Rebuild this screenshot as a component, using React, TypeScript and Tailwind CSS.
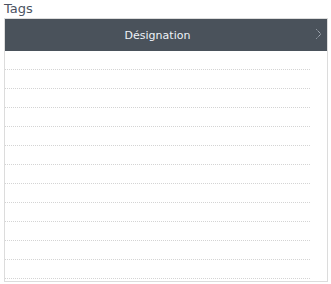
export default function App() {
  const rows = Array.from({ length: 12 });
  return (
    <div className="w-[331px] h-[284px] bg-white pl-1 pr-[3px]" style={{ fontFamily: '"DejaVu Sans", sans-serif' }}>
      <div className="h-[18px] text-[13px] leading-[18px] text-[#4b5261]">Tags</div>
      <div className="border border-[#dcdcdc] h-[264px] overflow-hidden">
        <div className="h-[32px] bg-[#4a525b] text-[#eef2f8] text-[11px] flex items-center relative">
          <div className="w-[305px] text-center pt-[3px]">Désignation</div>
          <svg className="absolute right-[5px] top-[10px]" width="6" height="10" viewBox="0 0 6 10">
            <path d="M0.5 0.5 L5 5 L0.5 9.5" fill="none" stroke="#cfd6e0" strokeWidth="1" strokeDasharray="1 1" />
          </svg>
        </div>
        <div className="w-[305px]">
          {rows.map((_, i) => (
            <div key={i} className="h-[19px] border-b border-dotted border-[#d4d4d4]" />
          ))}
        </div>
      </div>
    </div>
  );
}
